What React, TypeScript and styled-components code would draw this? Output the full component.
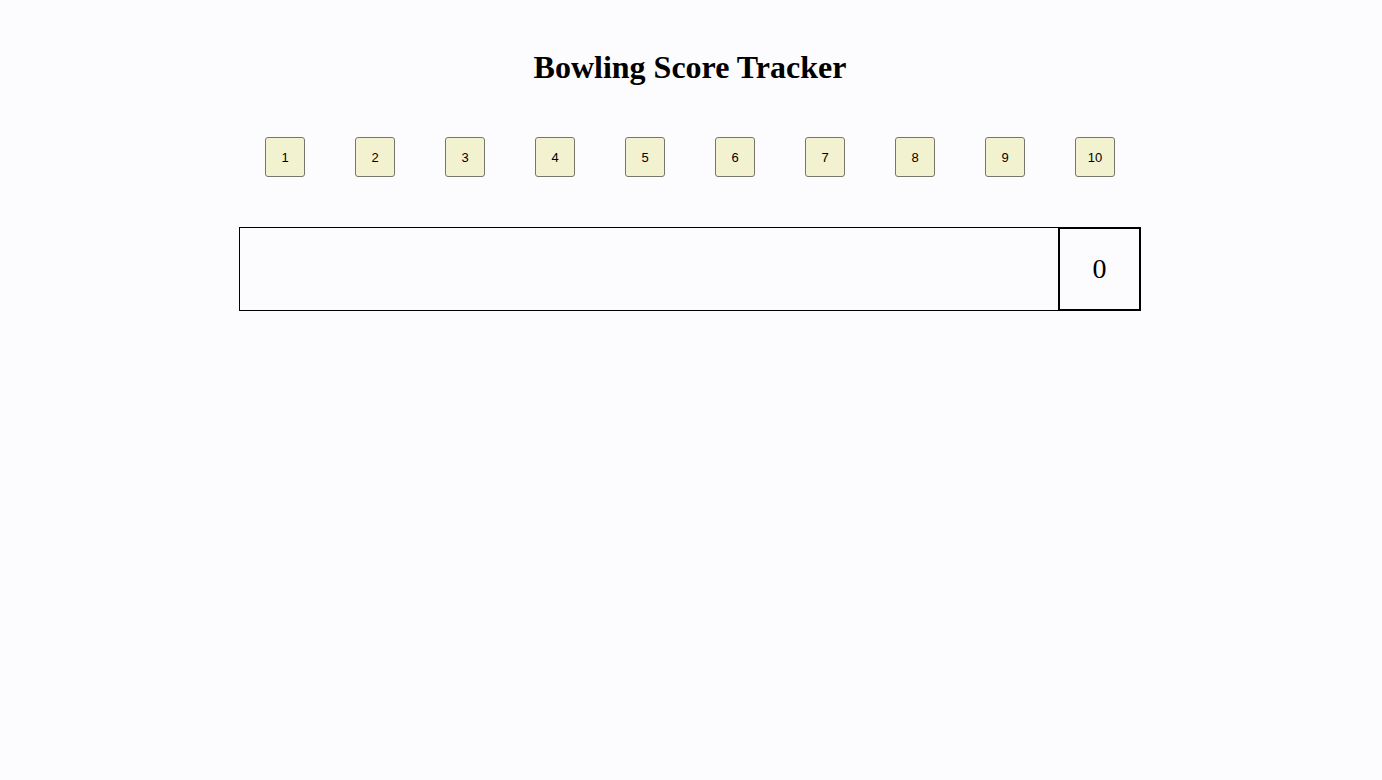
import React from "react";
import styled, { createGlobalStyle } from "styled-components";

const Global = createGlobalStyle`
  html, body {
    margin: 0;
    padding: 0;
    background: #fcfcfe;
  }
  body {
    font-family: "Liberation Serif", "Times New Roman", serif;
    color: #000;
  }
`;

const Page = styled.div`
  display: flex;
  flex-direction: column;
  align-items: center;
  padding-top: 49px;
  padding-right: 2px;
`;

const Title = styled.h1`
  margin: 0;
  font-family: "Liberation Serif", "Times New Roman", serif;
  font-size: 32px;
  font-weight: bold;
  line-height: 37px;
`;

const PinRow = styled.div`
  display: flex;
  justify-content: space-around;
  width: 900px;
  margin-top: 51px;
`;

const PinButton = styled.button`
  width: 40px;
  height: 40px;
  padding: 0;
  box-sizing: border-box;
  border: 1px solid #76766a;
  border-radius: 3px;
  background: #f2f2d0;
  font-family: "Liberation Sans", Arial, sans-serif;
  font-size: 13px;
  color: #000;
  cursor: pointer;
`;

const ScoreRow = styled.div`
  display: flex;
  box-sizing: border-box;
  width: 902px;
  height: 84px;
  margin-top: 50px;
  border: 1px solid #000;
`;

const Frames = styled.div`
  flex: 1;
  display: flex;
`;

const Total = styled.div`
  box-sizing: border-box;
  width: 83px;
  margin: -1px -1px -1px 0;
  border: 2px solid #000;
  display: flex;
  align-items: center;
  justify-content: center;
  font-family: "Liberation Serif", "Times New Roman", serif;
  font-size: 28px;
`;

export default function App() {
  const pins = Array.from({ length: 10 }, (_, i) => i + 1);
  return (
    <>
      <Global />
      <Page>
        <Title>Bowling Score Tracker</Title>
        <PinRow>
          {pins.map((p) => (
            <PinButton key={p}>{p}</PinButton>
          ))}
        </PinRow>
        <ScoreRow>
          <Frames />
          <Total>0</Total>
        </ScoreRow>
      </Page>
    </>
  );
}
